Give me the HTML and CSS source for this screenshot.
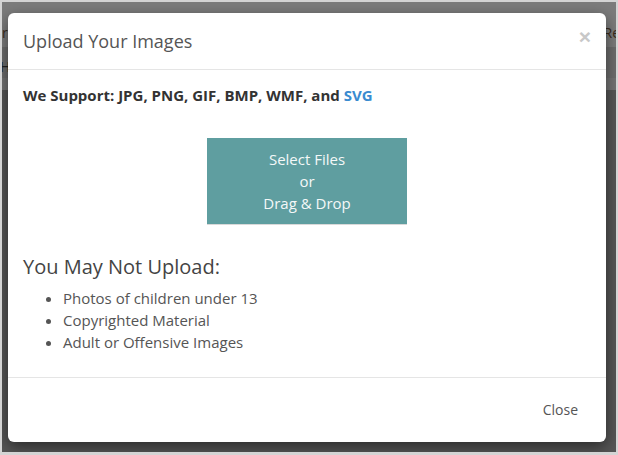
FILE: index.html
```html
<!DOCTYPE html>
<html lang="en">
<head>
    <meta charset="UTF-8">
    <meta name="viewport" content="width=device-width, initial-scale=1.0">
    <title>Upload Your Images</title>
    <link rel="stylesheet" href="styles.css">
</head>
<body>
    <div class="screen">
        <!-- page behind the backdrop -->
        <div class="band band-top">
            <span class="peek-left">r</span>
            <span class="peek-right">Re</span>
        </div>
        <div class="band band-nav">
            <span class="peek-left">H</span>
        </div>
        <div class="band band-light"></div>
        <div class="band band-rest"></div>

        <div class="modal">
            <div class="modal-header">
                <button class="close" type="button">&times;</button>
                <h4 class="modal-title">Upload Your Images</h4>
            </div>
            <div class="modal-body">
                <p class="support">We Support: JPG, PNG, GIF, BMP, WMF, and <span class="svg">SVG</span></p>
                <div class="drop-wrap">
                    <div class="drop">Select Files<br>or<br>Drag &amp; Drop</div>
                </div>
                <h3 class="rules-title">You May Not Upload:</h3>
                <ul class="rules">
                    <li>Photos of children under 13</li>
                    <li>Copyrighted Material</li>
                    <li>Adult or Offensive Images</li>
                </ul>
            </div>
            <div class="modal-footer">
                <button class="btn-close" type="button">Close</button>
            </div>
        </div>
    </div>
</body>
</html>
```

FILE: styles.css
```css
html, body{
    margin: 0;
    padding: 0;
}
body{
    background-color: #d4d4d4;
    padding: 2px;
    width: 614px;
    height: 451px;
    font-family: "Open Sans", "Noto Sans", sans-serif;
    font-size: 15px;
    color: #333;
}
.screen{
    position: relative;
    width: 614px;
    height: 450px;
    overflow: hidden;
    background-color: #565656;
}
.band{
    position: relative;
}
.band-top{
    height: 45px;
    background-color: #7c7c7c;
}
.band-nav{
    height: 31px;
    background-color: #6d6d6d;
}
.band-light{
    height: 12px;
    background-color: #747474;
}
.peek-left{
    position: absolute;
    left: 0;
    color: #3a2a1a;
    font-size: 14px;
}
.band-top .peek-left{
    top: 21px;
}
.band-nav .peek-left{
    top: 10px;
    left: -2px;
    color: #222;
}
.peek-right{
    position: absolute;
    right: -4px;
    top: 21px;
    color: #3a2a1a;
    font-size: 14px;
}

/* modal */
.modal{
    position: absolute;
    left: 6px;
    top: 11px;
    width: 598px;
    background-color: #fff;
    border-radius: 6px;
    box-shadow: 0 5px 15px rgba(0,0,0,0.5);
}
.modal-header{
    padding: 15px;
    border-bottom: 1px solid #e5e5e5;
}
.modal-title{
    margin: 0;
    font-size: 18px;
    font-weight: normal;
    line-height: 26px;
    color: #555;
}
.close{
    float: right;
    margin-top: -4px;
    padding: 0;
    border: 0;
    background: none;
    font-family: "Liberation Sans", Arial, sans-serif;
    font-size: 21px;
    font-weight: bold;
    line-height: 26px;
    color: #c8c8c8;
}
.modal-body{
    padding: 15px 15px 5px;
}
.support{
    margin: 0;
    font-weight: bold;
    line-height: 20px;
    color: #333;
}
.svg{
    color: #3a8bd0;
}
.drop-wrap{
    display: flex;
    justify-content: center;
    margin-top: 33px;
}
.drop{
    width: 200px;
    padding: 10px 0;
    text-align: center;
    line-height: 22px;
    color: #f4f8f8;
    background-color: #5f9ea0;
    border-bottom: 1px solid #d9d9d9;
}
.rules-title{
    margin: 30px 0 0;
    font-size: 20px;
    font-weight: normal;
    line-height: 24px;
    color: #444;
}
.rules{
    margin: 8px 0 19px;
    padding-left: 40px;
    line-height: 22px;
    color: #555;
}
.modal-footer{
    display: flex;
    justify-content: flex-end;
    padding: 15px;
    border-top: 1px solid #e5e5e5;
}
.btn-close{
    padding: 6px 12px;
    border: 1px solid transparent;
    background: none;
    font-family: "Open Sans", "Noto Sans", sans-serif;
    font-size: 14px;
    line-height: 20px;
    color: #555;
}
```
